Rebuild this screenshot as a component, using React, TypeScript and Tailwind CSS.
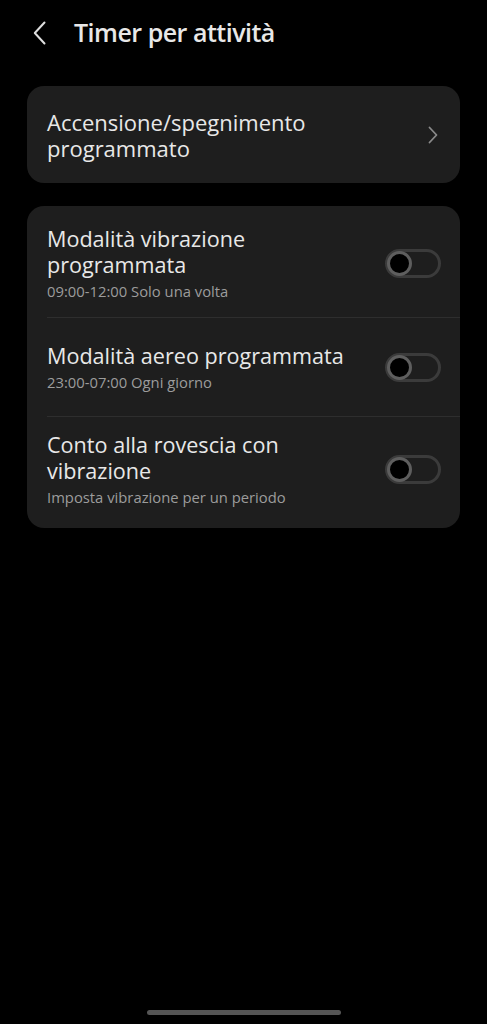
import { useState } from 'react';

const font = { fontFamily: '"Open Sans", "Noto Sans", sans-serif' };

function Toggle({ on, onChange }: { on: boolean; onChange: () => void }) {
  return (
    <button
      onClick={onChange}
      className="relative w-[56px] h-[29px] rounded-full border-[3px] border-[#3b3b3b] shrink-0"
    >
      <span
        className={
          on
            ? 'absolute top-[-1px] right-[-1px] w-[25px] h-[25px] rounded-full bg-[#e6e6e6]'
            : 'absolute top-[-1px] left-[-1px] w-[25px] h-[25px] rounded-full bg-black border-[3px] border-[#5e5e5e]'
        }
      />
    </button>
  );
}

interface RowProps {
  title: string;
  subtitle: string;
  pad: string;
  on: boolean;
  onChange: () => void;
}

function Row({ title, subtitle, pad, on, onChange }: RowProps) {
  return (
    <div className={`flex items-center justify-between pl-[20px] pr-[19px] ${pad}`}>
      <div>
        <p className="text-[21.6px] leading-[26px] text-[#e8e8e8] whitespace-pre-line">{title}</p>
        <p className="text-[14.8px] leading-[20px] text-[#9c9c9c] mt-[3px]">{subtitle}</p>
      </div>
      <Toggle on={on} onChange={onChange} />
    </div>
  );
}

export default function App() {
  const [toggles, setToggles] = useState([false, false, false]);
  const flip = (i: number) => setToggles((t) => t.map((v, j) => (j === i ? !v : v)));

  return (
    <div className="w-[487px] h-[1024px] bg-black flex flex-col" style={font}>
      <div className="flex items-center h-[66px] pl-[33px]">
        <svg width="13" height="24" viewBox="0 0 13 24" fill="none" className="shrink-0">
          <path d="M11.5 1.5 L1.8 12 L11.5 22.5" stroke="#dedede" strokeWidth="2" strokeLinecap="round" strokeLinejoin="round" />
        </svg>
        <h1 className="ml-[28px] text-[25px] font-semibold text-[#e8e8e8] tracking-[-0.5px]">Timer per attività</h1>
      </div>

      <div className="mx-[27px] mt-[20px] h-[97px] rounded-[17px] bg-[#1e1e1e] flex items-center justify-between pl-[20px] pr-[22px]">
        <p className="text-[22px] leading-[26px] text-[#e8e8e8] whitespace-pre-line">{'Accensione/spegnimento\nprogrammato'}</p>
        <svg width="10" height="18" viewBox="0 0 10 18" fill="none">
          <path d="M1.5 1.5 L8.5 9 L1.5 16.5" stroke="#8a8a8a" strokeWidth="1.8" strokeLinecap="round" strokeLinejoin="round" />
        </svg>
      </div>

      <div className="mx-[27px] mt-[23px] rounded-[17px] bg-[#1e1e1e] flex flex-col">
        <Row
          title={'Modalità vibrazione\nprogrammata'}
          subtitle="09:00-12:00 Solo una volta"
          pad="pt-[20px] pb-[16px]"
          on={toggles[0]}
          onChange={() => flip(0)}
        />
        <div className="ml-[20px] h-px bg-[#2e2e2e]" />
        <Row
          title="Modalità aereo programmata"
          subtitle="23:00-07:00 Ogni giorno"
          pad="pt-[25px] pb-[24px]"
          on={toggles[1]}
          onChange={() => flip(1)}
        />
        <div className="ml-[20px] h-px bg-[#2e2e2e]" />
        <Row
          title={'Conto alla rovescia con\nvibrazione'}
          subtitle="Imposta vibrazione per un periodo"
          pad="pt-[15px] pb-[21px]"
          on={toggles[2]}
          onChange={() => flip(2)}
        />
      </div>

      <div className="mt-auto mb-[9px] mx-auto w-[194px] h-[5px] rounded-full bg-[#555555]" />
    </div>
  );
}
